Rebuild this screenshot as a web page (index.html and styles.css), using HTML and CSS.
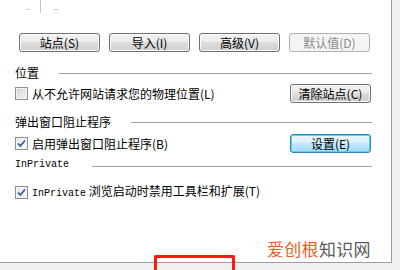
FILE: index.html
```html
<!DOCTYPE html>
<html lang="zh-CN">
<head>
<meta charset="utf-8">
<link rel="stylesheet" href="styles.css">
</head>
<body>
<div class="panel">
  <div class="marks"><span class="dash"></span><span class="vline"></span><span class="dash"></span></div>
  <div class="btnrow">
    <button class="btn">站点(S)</button>
    <button class="btn">导入(I)</button>
    <button class="btn">高级(V)</button>
    <button class="btn disabled">默认值(D)</button>
  </div>

  <div class="hdr h1"><span>位置</span><span class="rule"></span></div>
  <div class="row r1">
    <span class="cb"></span><span class="lbl">从不允许网站请求您的物理位置(L)</span>
    <button class="btn side">清除站点(C)</button>
  </div>

  <div class="hdr h2"><span>弹出窗口阻止程序</span><span class="rule"></span></div>
  <div class="row r2">
    <span class="cb checked"><svg viewBox="0 0 13 13" width="13" height="13"><path d="M3 6.5 L5.3 9 L10 3.5" fill="none" stroke="#2f59a8" stroke-width="1.8"/></svg></span><span class="lbl">启用弹出窗口阻止程序(B)</span>
    <button class="btn side default">设置(E)</button>
  </div>

  <div class="hdr h3"><span class="mono">InPrivate</span><span class="rule"></span></div>
  <div class="row r3">
    <span class="cb checked"><svg viewBox="0 0 13 13" width="13" height="13"><path d="M3 6.5 L5.3 9 L10 3.5" fill="none" stroke="#2f59a8" stroke-width="1.8"/></svg></span><span class="lbl"><span class="mono">InPrivate</span> 浏览启动时禁用工具栏和扩展(T)</span>
  </div>
</div>
<div class="watermark"><span class="wm-a">爱创根</span><span class="wm-b">知识网</span></div>
<div class="redbox"></div>
</body>
</html>
```
FILE: styles.css
```css
html, body {
  margin: 0;
  padding: 0;
}
body {
  background: #f0f0f0;
  width: 400px;
  height: 270px;
  overflow: hidden;
  position: relative;
  font-family: "Noto Sans CJK SC", "Liberation Sans", sans-serif;
  font-size: 12px;
  color: #000;
}
.panel {
  box-sizing: border-box;
  width: 392px;
  height: 263px;
  background: #fff;
  border-right: 1px solid #9c9c9c;
  border-bottom: 1px solid #9c9ca4;
  display: flex;
  flex-direction: column;
}
.marks {
  height: 13px;
  display: flex;
  padding-left: 26px;
}
.dash {
  width: 4px;
  height: 1px;
  background: #c8c8c8;
  margin-top: 9px;
}
.vline {
  width: 1px;
  height: 13px;
  background: #c4c4c4;
  margin: 0 13px 0 10px;
}
.btnrow {
  margin-top: 20px;
  padding-left: 19px;
  display: flex;
  gap: 9px;
}
.btn {
  box-sizing: border-box;
  width: 81px;
  height: 19px;
  padding: 0;
  margin: 0;
  font-family: "Noto Sans CJK SC", sans-serif;
  font-size: 12px;
  line-height: 15px;
  color: #000;
  border: 1px solid #707070;
  border-radius: 3px;
  background: linear-gradient(#f2f2f2 0%, #ebebeb 50%, #dddddd 50%, #cfcfcf 100%);
  box-shadow: inset 0 0 0 1px #fcfcfc;
}
.btn.disabled {
  color: #8a8a8a;
  border-color: #adb2b5;
  background: #f4f4f4;
  box-shadow: none;
}
.btn.side {
  margin-left: auto;
}
.btn.default {
  border-color: #3c7fb1;
  box-shadow: inset 0 0 0 1px #48d8fb;
  background: linear-gradient(#eaf6fd 0%, #d9f0fc 50%, #bee6fd 50%, #a7d9f5 100%);
}
.hdr {
  display: flex;
  align-items: center;
  height: 12px;
  line-height: 12px;
  padding-left: 15px;
  padding-right: 19px;
}
.hdr .rule {
  flex: 1;
  height: 1px;
  background: #a0a0a0;
  margin-left: 20px;
}
.h1 { margin-top: 15px; }
.h2 { margin-top: 13px; }
.h3 { margin-top: 6px; }
.h3 .rule { margin-left: 23px; margin-top: 3px; }
.row {
  display: flex;
  align-items: center;
  height: 19px;
  padding-left: 15px;
  padding-right: 20px;
}
.r1 { margin-top: 5px; }
.r2 { margin-top: 6px; }
.r3 { margin-top: 12px; }
.cb {
  box-sizing: border-box;
  width: 13px;
  height: 13px;
  border: 1px solid #8e8f8f;
  background: linear-gradient(135deg, #d0d0d0, #f4f4f4);
  box-shadow: inset 0 0 0 1px #f4f4f4;
  flex: none;
  position: relative;
}
.cb.checked {
  background: linear-gradient(135deg, #e6e6e6, #ffffff);
}
.cb svg {
  position: absolute;
  left: -1px;
  top: -1px;
}
.lbl {
  margin-left: 4px;
  white-space: nowrap;
  line-height: 14px;
}
.mono {
  font-family: "Liberation Mono", monospace;
  font-size: 10px;
}
.watermark {
  position: absolute;
  left: 267px;
  top: 238px;
  font-size: 17px;
  line-height: 22px;
  letter-spacing: 0.3px;
}
.wm-a { color: #e2631f; }
.wm-b { color: #5a5a5a; }
.redbox {
  position: absolute;
  left: 154px;
  top: 255px;
  width: 81px;
  height: 15px;
  box-sizing: border-box;
  border: 3px solid #ff1a0a;
  border-bottom: none;
  border-radius: 2px 2px 0 0;
}
```
